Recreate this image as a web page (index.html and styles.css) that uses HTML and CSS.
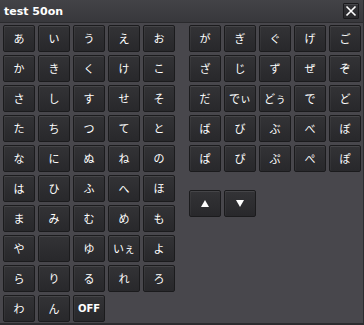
FILE: index.html
```html
<!DOCTYPE html>
<html lang="ja">
<head>
    <meta charset="UTF-8">
    <title>test 50on</title>
    <link rel="stylesheet" href="styles.css">
</head>
<body>

<div class="window">
    <div class="titlebar">
        <span class="title">test 50on</span>
        <button class="close" title="close">
            <svg width="12" height="12" viewBox="0 0 12 12"><path d="M1.5 1.5 L10.5 10.5 M10.5 1.5 L1.5 10.5" stroke="#fff" stroke-width="1.6"/></svg>
        </button>
    </div>

    <div class="content">
        <!-- basic kana -->
        <div class="grid">
            <button class="key">あ</button><button class="key">い</button><button class="key">う</button><button class="key">え</button><button class="key">お</button>
            <button class="key">か</button><button class="key">き</button><button class="key">く</button><button class="key">け</button><button class="key">こ</button>
            <button class="key">さ</button><button class="key">し</button><button class="key">す</button><button class="key">せ</button><button class="key">そ</button>
            <button class="key">た</button><button class="key">ち</button><button class="key">つ</button><button class="key">て</button><button class="key">と</button>
            <button class="key">な</button><button class="key">に</button><button class="key">ぬ</button><button class="key">ね</button><button class="key">の</button>
            <button class="key">は</button><button class="key">ひ</button><button class="key">ふ</button><button class="key">へ</button><button class="key">ほ</button>
            <button class="key">ま</button><button class="key">み</button><button class="key">む</button><button class="key">め</button><button class="key">も</button>
            <button class="key">や</button><button class="key"></button><button class="key">ゆ</button><button class="key">いぇ</button><button class="key">よ</button>
            <button class="key">ら</button><button class="key">り</button><button class="key">る</button><button class="key">れ</button><button class="key">ろ</button>
            <button class="key">わ</button><button class="key">ん</button><button class="key off">OFF</button>
        </div>

        <!-- dakuten / handakuten -->
        <div class="side">
            <div class="grid">
                <button class="key">が</button><button class="key">ぎ</button><button class="key">ぐ</button><button class="key">げ</button><button class="key">ご</button>
                <button class="key">ざ</button><button class="key">じ</button><button class="key">ず</button><button class="key">ぜ</button><button class="key">ぞ</button>
                <button class="key">だ</button><button class="key">でぃ</button><button class="key">どぅ</button><button class="key">で</button><button class="key">ど</button>
                <button class="key">ば</button><button class="key">び</button><button class="key">ぶ</button><button class="key">べ</button><button class="key">ぼ</button>
                <button class="key">ぱ</button><button class="key">ぴ</button><button class="key">ぷ</button><button class="key">ぺ</button><button class="key">ぽ</button>
            </div>
            <div class="arrows">
                <button class="key"><svg width="8" height="7" viewBox="0 0 8 7"><polygon points="4,0 8,7 0,7" fill="#fff"/></svg></button>
                <button class="key"><svg width="8" height="7" viewBox="0 0 8 7"><polygon points="0,0 8,0 4,7" fill="#fff"/></svg></button>
            </div>
        </div>
    </div>
</div>

</body>
</html>
```

FILE: styles.css
```css
body {
    margin: 0;
    background: #48474c;
    font-family: "DejaVu Sans", "Noto Sans CJK JP", sans-serif;
}
.window {
    width: 364px;
    height: 325px;
    box-sizing: border-box;
    background: #48474c;
    border-right: 1px solid #2c2c2f;
    border-bottom: 2px solid #2c2c2f;
}
.titlebar {
    height: 22px;
    display: flex;
    align-items: center;
    justify-content: space-between;
    padding: 0 4px 0 4px;
    background: linear-gradient(#434347, #38383c);
    border-bottom: 1px solid #2a2a2d;
}
.title {
    color: #fff;
    font-size: 11px;
    font-weight: bold;
}
.close {
    width: 16px;
    height: 16px;
    padding: 0;
    display: flex;
    align-items: center;
    justify-content: center;
    background: linear-gradient(#333337, #29292c);
    border: 1px solid #1a1a1c;
    border-radius: 1px;
    box-shadow: inset 0 1px 0 rgba(255, 255, 255, 0.1);
}
.content {
    display: flex;
    gap: 14px;
    padding: 2px 3px;
}
.grid {
    display: grid;
    grid-template-columns: repeat(5, 32px);
    grid-auto-rows: 27px;
    gap: 3px;
}
.side {
    display: flex;
    flex-direction: column;
}
.arrows {
    display: flex;
    gap: 3px;
    margin-top: 18px;
}
.arrows .key {
    width: 32px;
    height: 27px;
}
.key {
    padding: 0;
    display: flex;
    align-items: center;
    justify-content: center;
    background: linear-gradient(#333336, #28282b);
    border: 1px solid #1b1b1d;
    border-radius: 2px;
    box-shadow: inset 0 1px 0 rgba(255, 255, 255, 0.09), inset 1px 0 0 rgba(255, 255, 255, 0.04);
    color: #fff;
    font-family: "Noto Sans CJK JP", sans-serif;
    font-size: 11px;
    line-height: 1;
}
.off {
    font-family: "DejaVu Sans", sans-serif;
    font-weight: bold;
    font-size: 10px;
}
```
